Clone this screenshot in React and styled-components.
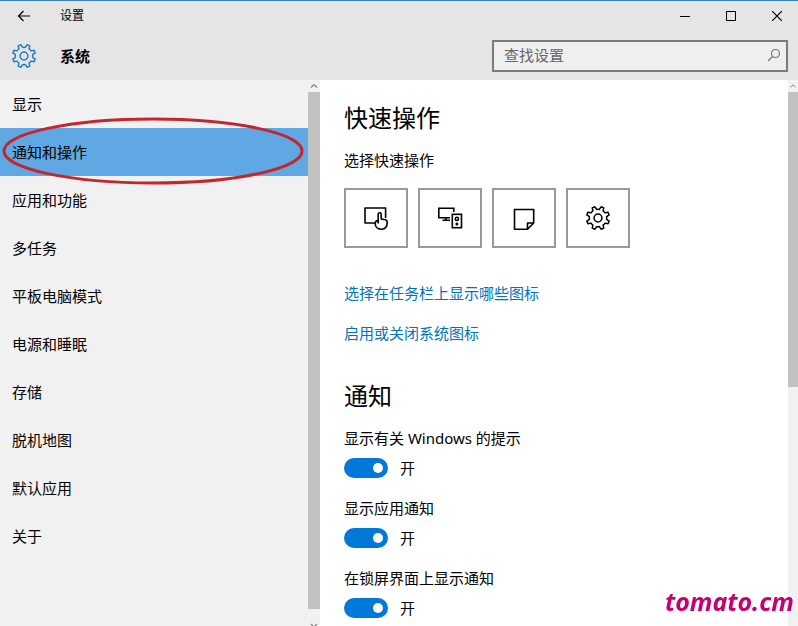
import React, { useState } from "react"
import styled, { createGlobalStyle } from "styled-components"

const GlobalStyle = createGlobalStyle`
  *,
  *::before,
  *::after {
    box-sizing: border-box;
  }

  body {
    margin: 0;
    color: #000;
    background: #fff;
    font-family: "Noto Sans", "Noto Sans CJK SC", sans-serif;
    font-size: 15px;
    line-height: 20px;
  }

  button,
  input {
    font: inherit;
    color: inherit;
  }

  h1,
  h2,
  p,
  ul {
    margin: 0;
    padding: 0;
  }
`

const Window = styled.div`
  display: flex;
  flex-direction: column;
  height: 100vh;
  overflow: hidden;
`

const Header = styled.header`
  flex: none;
  background: #e5e5e5;
  border-top: 1px solid #3c7fb1;
`

const TitleBar = styled.div`
  display: flex;
  align-items: center;
  height: 30px;
  font-size: 12px;
`

const TitleButton = styled.button`
  display: grid;
  place-items: center;
  width: ${({ $width }) => $width || 46}px;
  height: 30px;
  padding: 0;
  border: 0;
  background: none;

  &:hover {
    background: #d0d0d0;
  }
`

const WindowTitle = styled.span`
  flex: 1;
  padding-left: 12px;
`

const WindowButtons = styled.div`
  display: flex;
  margin-right: -2px;
`

const PageBar = styled.div`
  display: flex;
  align-items: center;
  height: 49px;
  padding: 0 10px 0 12px;
  gap: 24px;

  > h1 {
    flex: 1;
    font-size: 15px;
    font-weight: 700;
  }
`

const SearchBox = styled.label`
  display: flex;
  align-items: center;
  width: 296px;
  height: 32px;
  padding: 0 5px 2px 10px;
  border: 2px solid #7a7a7a;
  background: #efefef;

  > input {
    flex: 1;
    min-width: 0;
    padding: 0;
    border: 0;
    outline: 0;
    background: none;
  }

  > input::placeholder {
    color: #666;
    opacity: 1;
  }
`

const Body = styled.div`
  display: flex;
  flex: 1;
  min-height: 0;
`

const Sidebar = styled.nav`
  display: flex;
  flex: none;
  width: 320px;
  background: #f1f1f1;
`

const NavList = styled.ul`
  flex: 1;
  list-style: none;
`

const NavItem = styled.li`
  position: relative;
`

const NavLink = styled.a`
  display: flex;
  align-items: center;
  height: 48px;
  padding-left: 12px;
  color: #000;
  background: ${({ $active }) => ($active ? "#60a8e3" : "none")};
  text-decoration: none;
`

const Marker = styled.svg`
  position: absolute;
  top: -11px;
  left: 2px;
  width: calc(100% - 6px);
  height: 68px;
  overflow: visible;
  pointer-events: none;
`

const ScrollBar = styled.div`
  display: flex;
  flex-direction: column;
  flex: none;
  width: ${({ $width }) => $width}px;
  background: #f1f1f1;
`

const ScrollArrow = styled.svg`
  flex: none;
  width: 100%;
  height: 12px;
`

const ScrollThumb = styled.div`
  flex: none;
  height: ${({ $size }) => $size};
  background: #c1c1c1;
`

const ScrollTrack = styled.div`
  flex: 1;
  min-height: 0;
`

const Content = styled.main`
  flex: 1;
  min-width: 0;
  padding: 20px 24px;
  overflow: auto;
  scrollbar-width: none;
`

const SectionTitle = styled.h2`
  font-size: 24px;
  font-weight: 400;
  line-height: 36px;
`

const Section = styled.section`
  margin-bottom: 35px;
`

const Caption = styled.p`
  margin-top: 14px;
`

const Tiles = styled.div`
  display: flex;
  gap: 10px;
  margin: 18px 0 35px;
`

const Tile = styled.button`
  display: grid;
  place-items: center;
  width: 64px;
  height: 60px;
  padding: 0;
  border: 2px solid #999;
  background: #fff;

  &:hover {
    border-color: #666;
  }
`

const Links = styled.div`
  display: flex;
  flex-direction: column;
  align-items: flex-start;
  gap: 20px;
`

const TextLink = styled.a`
  color: #0072c0;
  text-decoration: none;
`

const Setting = styled.label`
  display: block;
  margin-top: 14px;

  & + & {
    margin-top: 20px;
  }
`

const SwitchRow = styled.span`
  display: flex;
  align-items: center;
  gap: 12px;
  height: 20px;
  margin-top: 10px;
`

const Switch = styled.input`
  appearance: none;
  display: flex;
  align-items: center;
  justify-content: ${({ checked }) => (checked ? "flex-end" : "flex-start")};
  width: 44px;
  height: 20px;
  margin: 0;
  padding: 0 5px;
  border-radius: 10px;
  background: ${({ checked }) => (checked ? "#0078d7" : "#999")};

  &::before {
    content: "";
    width: 10px;
    height: 10px;
    border-radius: 50%;
    background: #fff;
  }
`

const Watermark = styled.div`
  position: fixed;
  right: 4px;
  bottom: 10px;
  color: #c8006e;
  font-family: "Noto Sans", sans-serif;
  font-size: 25px;
  font-style: italic;
  font-weight: 700;
  line-height: 30px;
  pointer-events: none;
`

// cog outline centred on 0,0: narrow tapered teeth joined by arcs of the body
const gearPath = (teeth, outer, inner) => {
  const step = (Math.PI * 2) / teeth
  const at = (r, turn) => {
    const a = turn * step - Math.PI / 2
    return `${(r * Math.cos(a)).toFixed(2)} ${(r * Math.sin(a)).toFixed(2)}`
  }
  let d = `M${at(outer, 0.34)}`
  for (let i = 0; i < teeth; i++) {
    d += `L${at(outer, i + 0.66)}L${at(inner, i + 0.8)}A${inner} ${inner} 0 0 1 ${at(inner, i + 1.2)}L${at(outer, i + 1.34)}`
  }
  return `${d}Z`
}

const GearIcon = ({ color = "#000", strokeWidth = 1.5 }) => (
  <svg width="24" height="24" viewBox="-12 -12 24 24" fill="none" stroke={color} strokeWidth={strokeWidth} strokeLinejoin="round">
    <path d={gearPath(8, 11.6, 8.7)} />
    <circle r="3.9" />
  </svg>
)

const TouchIcon = () => (
  <svg width="26" height="24" viewBox="0 0 26 24" fill="none" stroke="#000" strokeWidth="1.6" strokeLinejoin="round">
    <path d="M12 17H2V2H22.6V12" />
    <path d="M15.2 17.500V8.300a1.500 1.500 0 0 1 3 0V13l4.300.8q1.700.4 1.700 2.200c0 4.500-1.700 7.200-5.700 7.200-4.300 0-6.300-2.700-6.300-5.700 0-2 1-3 3-3.300" />
  </svg>
)

const ConnectIcon = () => (
  <svg width="26" height="24" viewBox="0 0 26 24" fill="none" stroke="#000" strokeWidth="1.6">
    <path d="M13 11.800H1.800V2.300H16.800V6M9 12V14M5.500 14.300H13" />
    <rect x="15.300" y="8.300" width="9.200" height="13.400" />
    <circle cx="19.900" cy="12.900" r="1.600" />
    <circle cx="19.900" cy="18" r="1.500" fill="#000" stroke="none" />
  </svg>
)

const NoteIcon = () => (
  <svg width="24" height="24" viewBox="0 0 24 24" fill="none" stroke="#000" strokeWidth="1.6" strokeLinejoin="round">
    <path d="M2.500 3.500H21.700V17L15.500 23.200H2.500ZM15.500 23V17H21.500" />
  </svg>
)

const NAV = ["显示", "通知和操作", "应用和功能", "多任务", "平板电脑模式", "电源和睡眠", "存储", "脱机地图", "默认应用", "关于"]

const TILES = [
  { label: "平板模式", icon: <TouchIcon /> },
  { label: "连接", icon: <ConnectIcon /> },
  { label: "便笺", icon: <NoteIcon /> },
  { label: "所有设置", icon: <GearIcon /> },
]

const SETTINGS = ["显示有关 Windows 的提示", "显示应用通知", "在锁屏界面上显示通知"]

const Toggle = ({ label }) => {
  const [on, setOn] = useState(true)
  return (
    <Setting>
      {label}
      <SwitchRow>
        <Switch type="checkbox" role="switch" checked={on} onChange={() => setOn(!on)} />
        {on ? "开" : "关"}
      </SwitchRow>
    </Setting>
  )
}

const Scroll = ({ width, size, downArrow }) => (
  <ScrollBar $width={width} aria-hidden="true">
    <ScrollArrow viewBox="0 0 12 12" fill="none" stroke="#858585" strokeWidth="1.2">
      <path d="M3 7.500L6 4.500L9 7.500" />
    </ScrollArrow>
    <ScrollThumb $size={size} />
    <ScrollTrack />
    {downArrow && (
      <ScrollArrow viewBox="0 0 12 12" fill="none" stroke="#858585" strokeWidth="1.2">
        <path d="M3 10L6 13L9 10" />
      </ScrollArrow>
    )}
  </ScrollBar>
)

const App = () => {
  const [active, setActive] = useState(1)

  return (
    <Window>
      <GlobalStyle />
      <Header>
        <TitleBar>
          <TitleButton $width={48} aria-label="返回">
            <svg width="14" height="12" viewBox="0 0 14 12" fill="none" stroke="#000" strokeWidth="1.2">
              <path d="M13 6H1.500M6.500 1L1.500 6L6.500 11" />
            </svg>
          </TitleButton>
          <WindowTitle>设置</WindowTitle>
          <WindowButtons>
            <TitleButton aria-label="最小化">
              <svg width="10" height="10" viewBox="0 0 10 10" stroke="#000">
                <path d="M0 5.500H10" />
              </svg>
            </TitleButton>
            <TitleButton aria-label="最大化">
              <svg width="10" height="10" viewBox="0 0 10 10" fill="none" stroke="#000">
                <path d="M.5 .5H9.500V9.500H.5Z" />
              </svg>
            </TitleButton>
            <TitleButton aria-label="关闭">
              <svg width="10" height="10" viewBox="0 0 10 10" stroke="#000" strokeWidth="1.2">
                <path d="M0 0L10 10M10 0L0 10" />
              </svg>
            </TitleButton>
          </WindowButtons>
        </TitleBar>
        <PageBar>
          <GearIcon color="#1f7fc4" />
          <h1>系统</h1>
          <SearchBox>
            <input type="text" placeholder="查找设置" aria-label="查找设置" />
            <svg width="14" height="14" viewBox="0 0 14 14" fill="none" stroke="#777" strokeWidth="1.2">
              <circle cx="8.500" cy="5.500" r="4" />
              <path d="M5.500 8.500L1 13" />
            </svg>
          </SearchBox>
        </PageBar>
      </Header>

      <Body>
        <Sidebar>
          <NavList>
            {NAV.map((item, i) => (
              <NavItem key={item}>
                <NavLink href="#" $active={i === active} onClick={() => setActive(i)}>
                  {item}
                </NavLink>
                {i === 1 && (
                  <Marker viewBox="0 0 302 68" preserveAspectRatio="none" fill="none" stroke="#c4262e" strokeWidth="3">
                    <ellipse cx="151" cy="34" rx="149" ry="32" />
                  </Marker>
                )}
              </NavItem>
            ))}
          </NavList>
          <Scroll width={12} size="calc(100% - 29px)" downArrow />
        </Sidebar>

        <Content>
          <Section>
            <SectionTitle>快速操作</SectionTitle>
            <Caption>选择快速操作</Caption>
            <Tiles>
              {TILES.map(({ label, icon }) => (
                <Tile key={label} aria-label={label}>
                  {icon}
                </Tile>
              ))}
            </Tiles>
            <Links>
              <TextLink href="#">选择在任务栏上显示哪些图标</TextLink>
              <TextLink href="#">启用或关闭系统图标</TextLink>
            </Links>
          </Section>
          <Section>
            <SectionTitle>通知</SectionTitle>
            {SETTINGS.map((label) => (
              <Toggle key={label} label={label} />
            ))}
          </Section>
        </Content>
        <Scroll width={10} size="54%" />
      </Body>
      <Watermark>tomato.cm</Watermark>
    </Window>
  )
}

export default App
